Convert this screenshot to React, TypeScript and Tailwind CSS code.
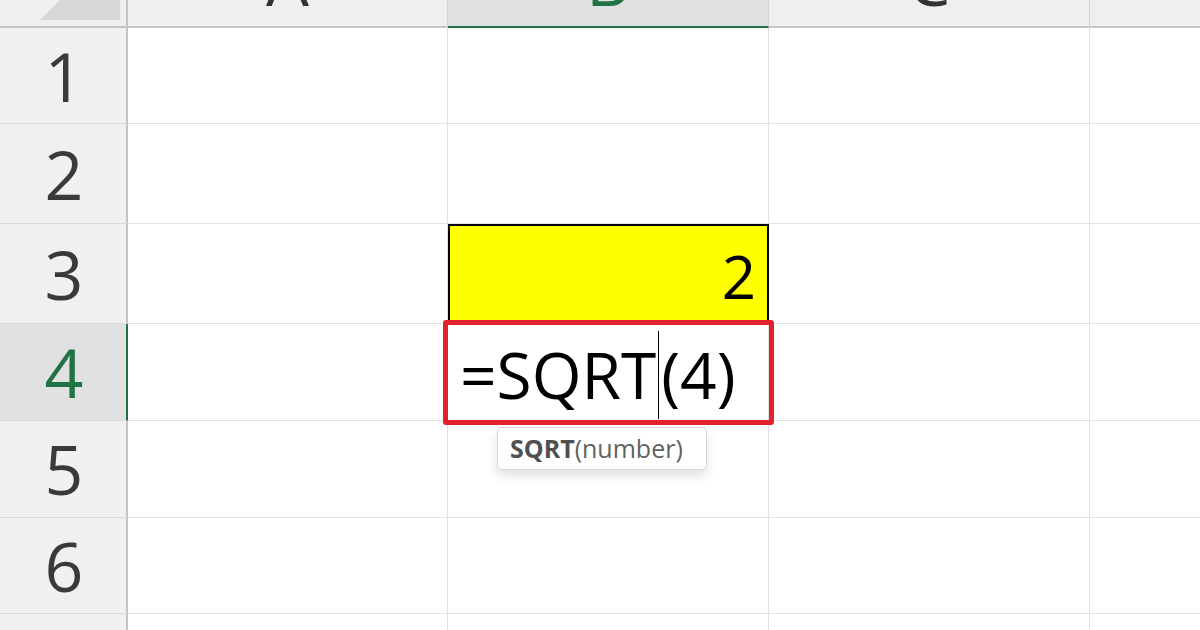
const COLS = [
  { key: 'A', w: 'w-[320px]' },
  { key: 'B', w: 'w-[321px]' },
  { key: 'C', w: 'w-[321px]' },
  { key: 'D', w: 'w-[321px]' },
]

const ROWS = [
  { n: 1, h: 'h-[96px]' },
  { n: 2, h: 'h-[100px]' },
  { n: 3, h: 'h-[100px]' },
  { n: 4, h: 'h-[97px]' },
  { n: 5, h: 'h-[97px]' },
  { n: 6, h: 'h-[96px]' },
  { n: 7, h: 'h-[96px]' },
]

function ColumnHeader({ label, width, active }: { label: string; width: string; active: boolean }) {
  return (
    <div
      className={`${width} shrink-0 h-full flex items-end justify-center overflow-hidden border-r border-[#d4d4d4] ${
        active ? 'bg-[#e1e1e1] border-b-2 border-b-[#217346]' : 'bg-[#efefef] border-b-2 border-b-[#c4c4c4]'
      }`}
    >
      <span className={`text-[68px] leading-[68px] mb-[12px] ${active ? 'text-[#217346]' : 'text-[#333]'}`}>
        {label}
      </span>
    </div>
  )
}

function RowHeader({ n, active }: { n: number; active: boolean }) {
  return (
    <div
      className={`w-[128px] shrink-0 h-full flex items-center justify-center border-b border-[#d9d9d9] ${
        active ? 'bg-[#e1e1e1] border-r-2 border-r-[#217346]' : 'bg-[#f0f0f0] border-r-2 border-r-[#c4c4c4]'
      }`}
    >
      <span className={`text-[68px] leading-none pl-[2px] ${active ? 'text-[#217346]' : 'text-[#3a3a3a]'}`}>
        {n}
      </span>
    </div>
  )
}

function Cell({ col, row, width }: { col: string; row: number; width: string }) {
  if (col === 'B' && row === 3) {
    return (
      <div className={`${width} shrink-0 h-full bg-[#ffff00] border-2 border-black flex items-center justify-end pr-[11px]`}>
        <span className="text-[60px] leading-none text-black mt-[4px]">2</span>
      </div>
    )
  }
  if (col === 'B' && row === 4) {
    return (
      <div className={`${width} shrink-0 h-full bg-white border-r border-b border-[#e1e1e1] flex items-center pl-[12px]`}>
        <span className="text-[64px] leading-none text-black mt-[6px] flex items-center">
          =SQRT
          <span className="inline-block w-px h-[88px] bg-black mx-[2px]" />
          (4)
        </span>
      </div>
    )
  }
  return <div className={`${width} shrink-0 h-full bg-white border-r border-b border-[#e1e1e1]`} />
}

export default function App() {
  return (
    <div className="relative w-[1200px] h-[630px] overflow-hidden bg-white font-['Open_Sans','Noto_Sans',sans-serif]">
      {/* column headers */}
      <div className="flex h-[28px]">
        <div className="w-[128px] shrink-0 h-full bg-[#efefef] border-r-2 border-b-2 border-[#c4c4c4] flex items-end justify-end pr-[6px] pb-[6px]">
          <svg width="80" height="22" viewBox="0 0 80 22">
            <polygon points="0,22 80,22 80,-58" fill="#d8d8d8" />
          </svg>
        </div>
        {COLS.map((c) => (
          <ColumnHeader key={c.key} label={c.key} width={c.w} active={c.key === 'B'} />
        ))}
      </div>

      {/* grid body */}
      {ROWS.map((r) => (
        <div key={r.n} className={`flex ${r.h}`}>
          <RowHeader n={r.n} active={r.n === 4} />
          {COLS.map((c) => (
            <Cell key={c.key} col={c.key} row={r.n} width={c.w} />
          ))}
        </div>
      ))}

      {/* edit box around B4 */}
      <div className="absolute left-[443px] top-[320px] w-[331px] h-[105px] border-[5px] border-[#e3212d] rounded-[3px]" />

      {/* function hint */}
      <div className="absolute left-[497px] top-[427px] w-[210px] h-[43px] bg-white border border-[#d6d6d6] rounded-[5px] shadow-[0_6px_12px_rgba(0,0,0,0.12)] flex items-center pl-[12px] text-[25px] leading-none">
        <span className="font-bold text-[#505050]">SQRT</span>
        <span className="text-[#626262]">(number)</span>
      </div>
    </div>
  )
}
